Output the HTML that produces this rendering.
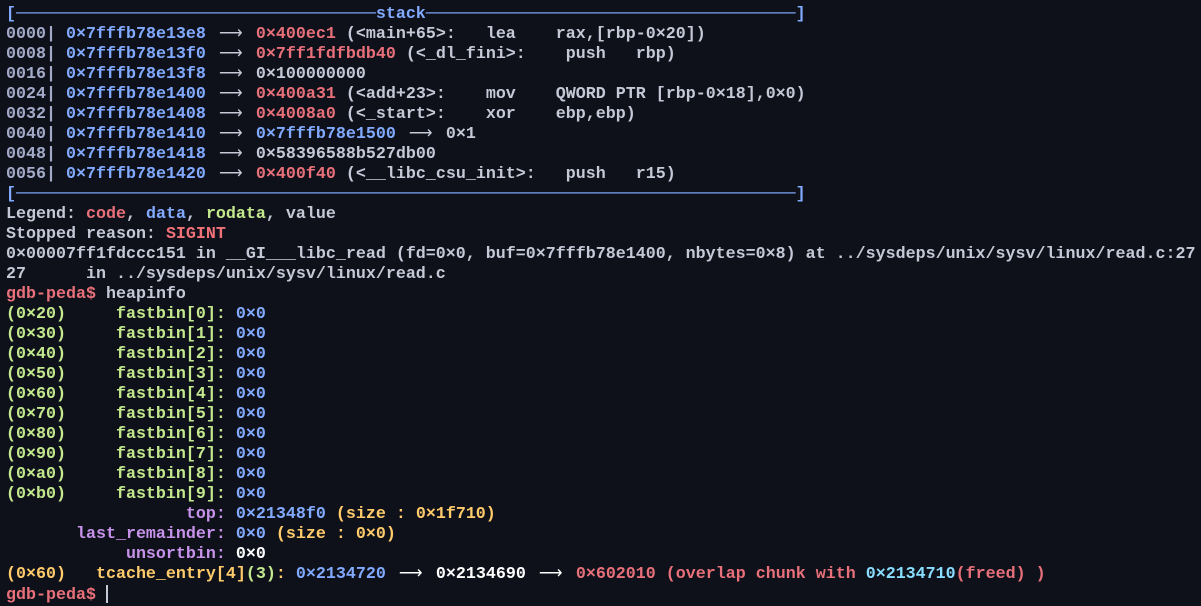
<!DOCTYPE html>
<html><head><meta charset="utf-8"><style>
html,body{margin:0;padding:0;background:#0f111a;width:1201px;height:603px;overflow:hidden}
pre{margin:0;position:absolute;left:6px;top:5px;font-family:"Liberation Mono",monospace;font-size:16.67px;line-height:20px;color:#c5c8d6;font-weight:bold;white-space:pre}
.b{color:#82aaff}.r{color:#e8707a}.g{color:#c3e88d}.p{color:#c792ea}.y{color:#ffcb6b}.w{color:#ffffff}.c{color:#89ddff}.s{color:#a3abc9}
.a{display:inline-block;width:30px;text-align:center;font-weight:normal}
.cur{display:inline-block;width:2px;height:18px;background:#c5c8d6;vertical-align:-4px}
</style></head><body><pre><span class="b">[────────────────────────────────────stack─────────────────────────────────────]</span>
<span class="s">0000|</span> <span class="b">0×7fffb78e13e8</span> <span class="a">⟶</span> <span class="r">0×400ec1</span> (&lt;main+65&gt;:   lea    rax,[rbp-0×20])
<span class="s">0008|</span> <span class="b">0×7fffb78e13f0</span> <span class="a">⟶</span> <span class="r">0×7ff1fdfbdb40</span> (&lt;_dl_fini&gt;:    push   rbp)
<span class="s">0016|</span> <span class="b">0×7fffb78e13f8</span> <span class="a">⟶</span> 0×100000000
<span class="s">0024|</span> <span class="b">0×7fffb78e1400</span> <span class="a">⟶</span> <span class="r">0×400a31</span> (&lt;add+23&gt;:    mov    QWORD PTR [rbp-0×18],0×0)
<span class="s">0032|</span> <span class="b">0×7fffb78e1408</span> <span class="a">⟶</span> <span class="r">0×4008a0</span> (&lt;_start&gt;:    xor    ebp,ebp)
<span class="s">0040|</span> <span class="b">0×7fffb78e1410</span> <span class="a">⟶</span> <span class="b">0×7fffb78e1500</span> <span class="a">⟶</span> 0×1
<span class="s">0048|</span> <span class="b">0×7fffb78e1418</span> <span class="a">⟶</span> 0×58396588b527db00
<span class="s">0056|</span> <span class="b">0×7fffb78e1420</span> <span class="a">⟶</span> <span class="r">0×400f40</span> (&lt;__libc_csu_init&gt;:   push   r15)
<span class="b">[──────────────────────────────────────────────────────────────────────────────]</span>
Legend: <span class="r">code</span>, <span class="b">data</span>, <span class="g">rodata</span>, value
Stopped reason: <span class="r" style="color:#f07178">SIGINT</span>
0×00007ff1fdccc151 in __GI___libc_read (fd=0×0, buf=0×7fffb78e1400, nbytes=0×8) at ../sysdeps/unix/sysv/linux/read.c:27
27      in ../sysdeps/unix/sysv/linux/read.c
<span class="r">gdb-peda$</span> heapinfo
<span class="g">(0×20)     fastbin[0]: </span><span class="b">0×0</span>
<span class="g">(0×30)     fastbin[1]: </span><span class="b">0×0</span>
<span class="g">(0×40)     fastbin[2]: </span><span class="b">0×0</span>
<span class="g">(0×50)     fastbin[3]: </span><span class="b">0×0</span>
<span class="g">(0×60)     fastbin[4]: </span><span class="b">0×0</span>
<span class="g">(0×70)     fastbin[5]: </span><span class="b">0×0</span>
<span class="g">(0×80)     fastbin[6]: </span><span class="b">0×0</span>
<span class="g">(0×90)     fastbin[7]: </span><span class="b">0×0</span>
<span class="g">(0×a0)     fastbin[8]: </span><span class="b">0×0</span>
<span class="g">(0×b0)     fastbin[9]: </span><span class="b">0×0</span>
<span class="p">                  top: </span><span class="b">0×21348f0</span> <span class="y">(size : 0×1f710)</span>
<span class="p">       last_remainder: </span><span class="b">0×0</span> <span class="y">(size : 0×0)</span>
<span class="p">            unsortbin: </span><span class="w">0×0</span>
<span class="y">(0×60)   tcache_entry[4]</span><span class="g">(3)</span><span class="y">:</span> <span class="b">0×2134720</span> <span class="a w">⟶</span> <span class="w">0×2134690</span> <span class="a w">⟶</span> <span class="r">0×602010 (overlap chunk with </span><span class="c">0×2134710</span><span class="r">(freed) )</span>
<span class="r">gdb-peda$</span> <span class="cur"></span></pre></body></html>
